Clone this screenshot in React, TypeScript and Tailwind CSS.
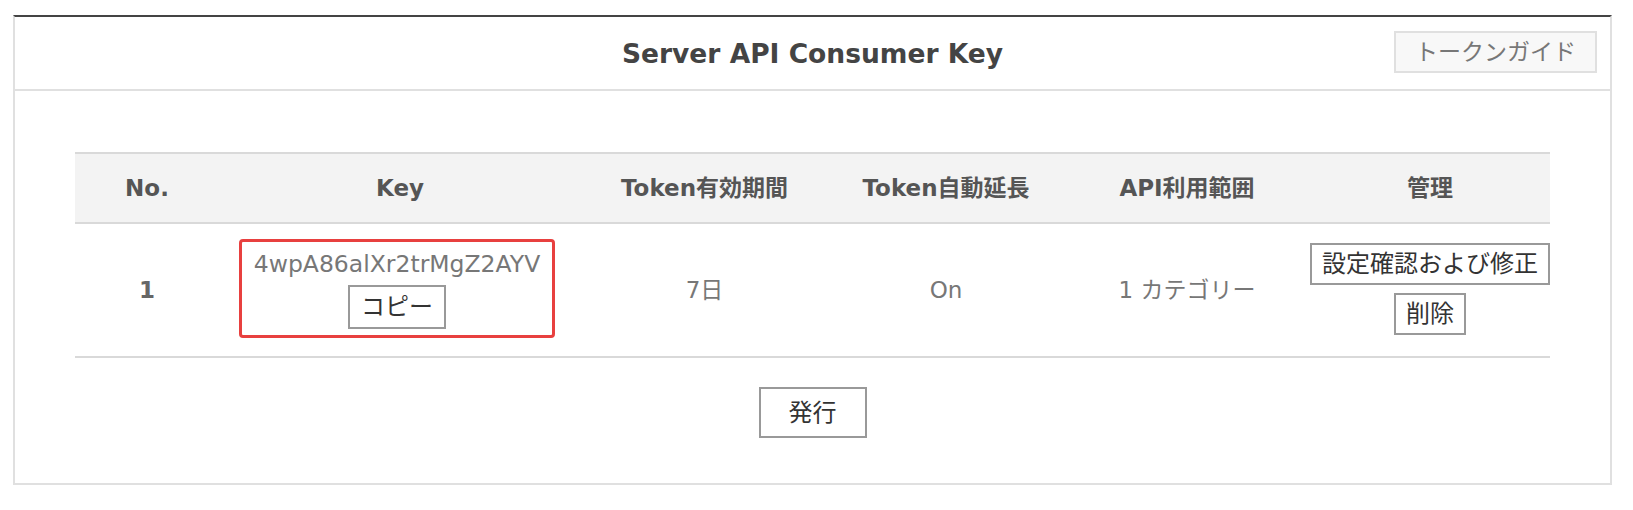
const font = "font-['DejaVu_Sans','Noto_Sans_CJK_JP',sans-serif]";

const cols = 'grid grid-cols-[144px_362px_247px_236px_246px_240px]';

const headers = ['No.', 'Key', 'Token有効期間', 'Token自動延長', 'API利用範囲', '管理'];

const btn = 'border-2 border-[#999] bg-white text-[#333] text-[24px] leading-[34px] whitespace-nowrap';

export default function App() {
  return (
    <div className={`${font} bg-white w-[1633px] h-[510px] pt-[15px]`}>
      <div className="ml-[13px] w-[1599px] border-2 border-t-2 border-[#e0e0e0] border-t-[#444]">
        {/* header */}
        <div className="grid grid-cols-[1fr_auto_1fr] items-center h-[74px] border-b-2 border-[#e0e0e0]">
          <div />
          <h1 className="text-[26.5px] font-bold text-[#444] leading-none pt-[2px]">Server API Consumer Key</h1>
          <div className="flex justify-end pr-[13px]">
            <button className="border-2 border-[#e0e0e0] bg-[#f8f8f8] text-[#777] text-[23px] leading-[34px] px-[19px] py-[2px] mb-[3px]">
              トークンガイド
            </button>
          </div>
        </div>

        {/* body */}
        <div className="px-[60px] pt-[61px] pb-[45px]">
          <div className={`${cols} h-[72px] bg-[#f3f3f3] border-y-2 border-[#d9d9d9] items-center`}>
            {headers.map((h) => (
              <div key={h} className="text-center text-[23px] font-bold text-[#555]">
                {h}
              </div>
            ))}
          </div>

          <div className={`${cols} h-[134px] border-b-2 border-[#d9d9d9] items-center text-[23px] text-[#777] text-center`}>
            <div className="font-bold text-[#666]">1</div>
            <div className="flex justify-center">
              <div className="flex flex-col items-center border-[3px] border-[#e8403f] rounded-[4px] px-[12px] pt-[5px] pb-[6px] -mt-[3px] -ml-[6px]">
                <span className="leading-[34px] text-[23.5px]">4wpA86alXr2trMgZ2AYV</span>
                <button className={`${btn} text-[23px] px-[11px] py-[3px] mt-[4px]`}>コピー</button>
              </div>
            </div>
            <div>7日</div>
            <div>On</div>
            <div>1 カテゴリー</div>
            <div className="flex flex-col items-center gap-[8px] -mt-[3px]">
              <button className={`${btn} px-[10px] py-[2px]`}>設定確認および修正</button>
              <button className={`${btn} px-[10px] py-[2px]`}>削除</button>
            </div>
          </div>

          <div className="flex justify-center pt-[29px]">
            <button className={`${btn} px-[28px] pt-[7px] pb-[6px]`}>発行</button>
          </div>
        </div>
      </div>
    </div>
  );
}
